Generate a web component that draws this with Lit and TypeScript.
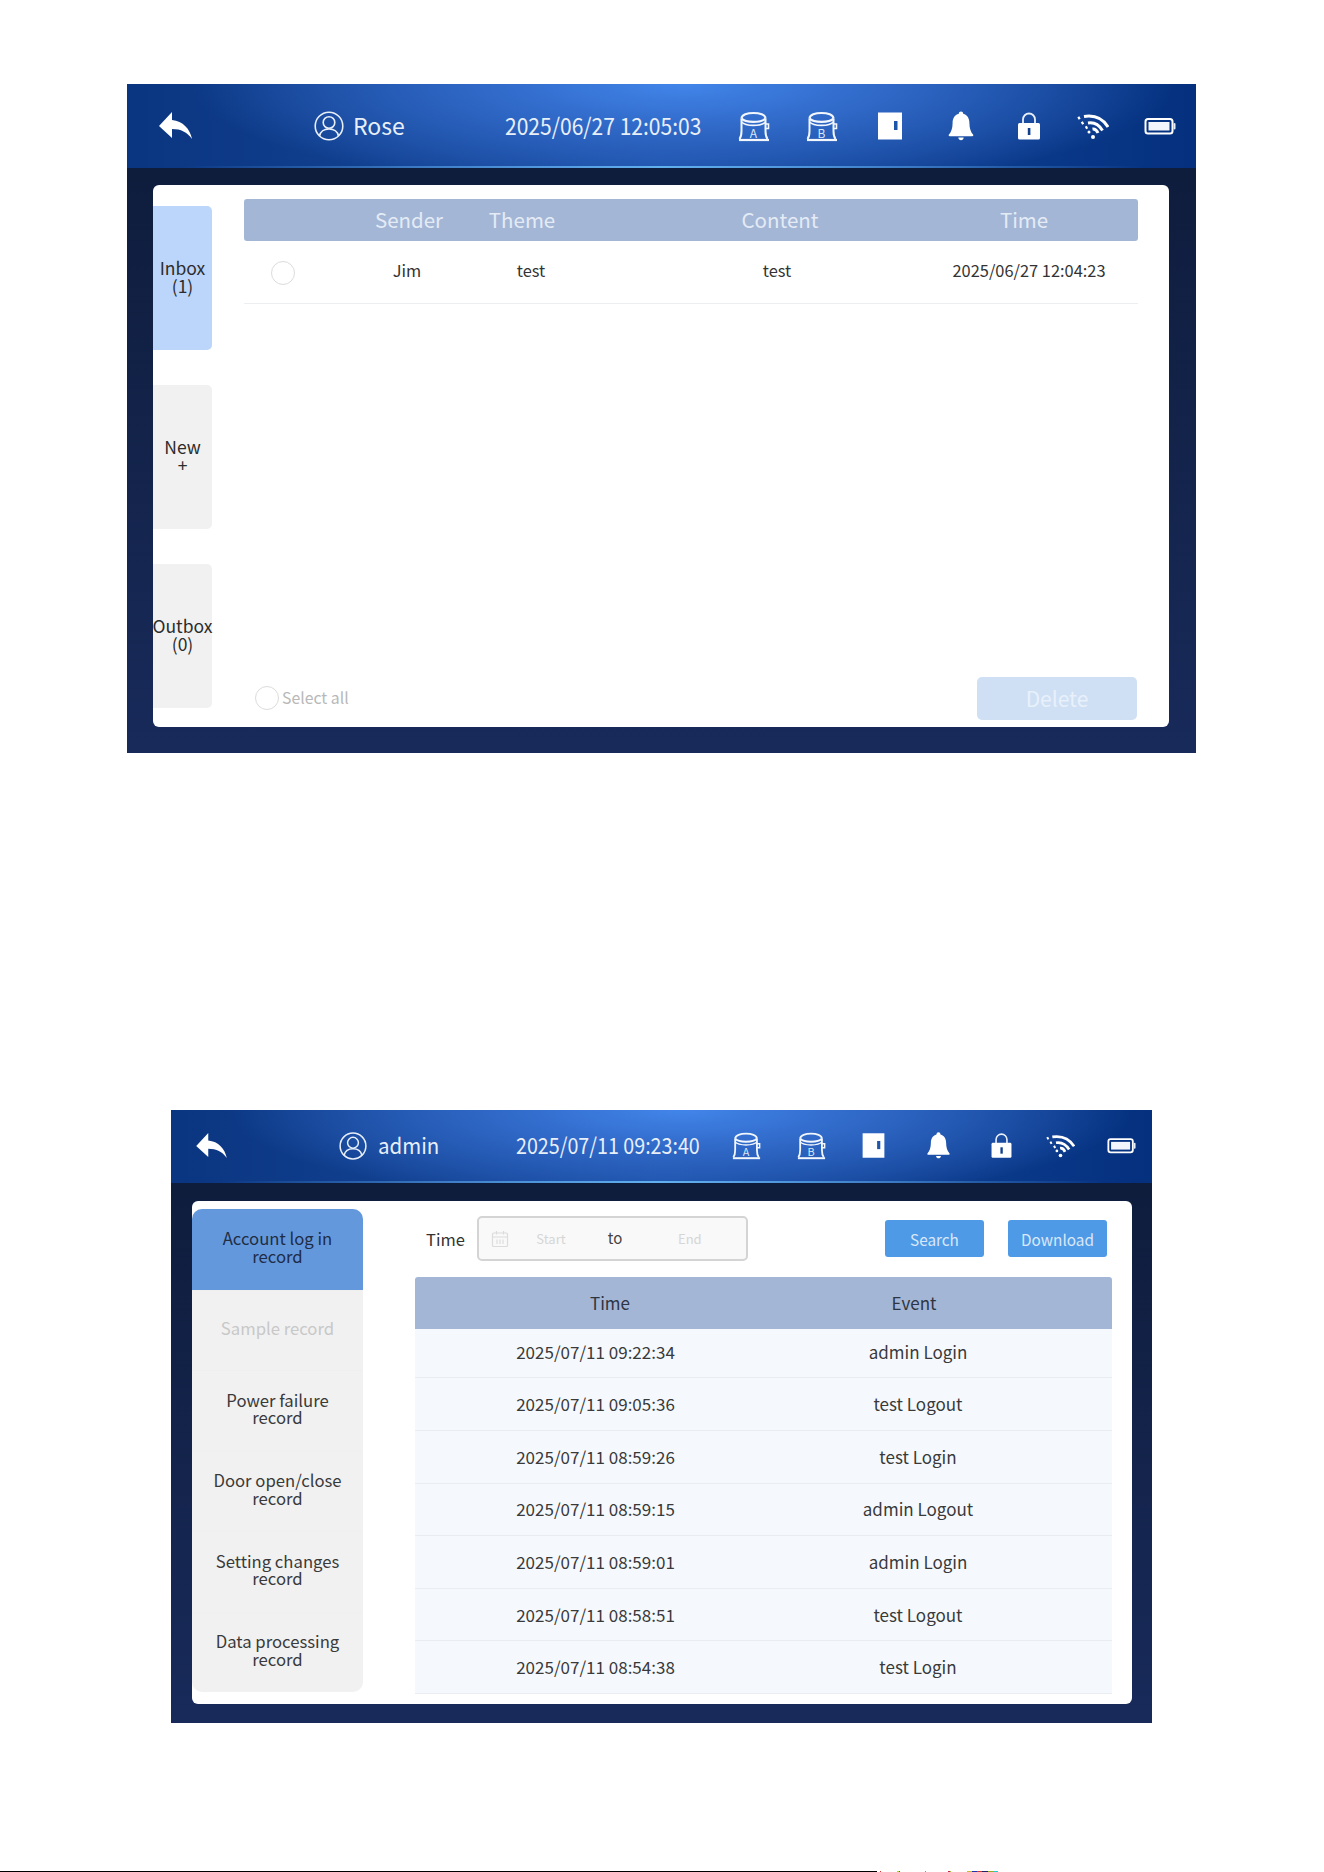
import { LitElement, html, css, svg } from "lit";
import { customElement } from "lit/decorators.js";

const compressor = (letter: string) => svg`
  <svg class="ic" viewBox="0 0 32 32" fill="none" stroke="#f2f6fd" stroke-width="2">
    <path d="M3.500 8.500C3.500 1 27.500 1 27.500 8.500"/>
    <path d="M3.500 8.500C7.500 13 23.500 13 27.500 8.500" stroke-width="2.200"/>
    <path d="M3.500 12C7.500 16.500 23.500 16.500 27.500 12" stroke-width="1.600"/>
    <path d="M3.500 8.500V21C3.500 25 3 27 1.500 29M27.500 8.500V21C27.500 25 28 27 29.500 29"/>
    <path d="M27.500 14H30.500V18.500H27.500" stroke-width="1.600"/>
    <path d="M1 30H31" stroke-width="2.200"/>
    <text x="15.500" y="27.500" text-anchor="middle" font-size="12" fill="#dbe8fa" stroke="none" class="ltr">${letter}</text>
  </svg>`;

const door = svg`
  <svg class="ic" viewBox="0 0 32 32">
    <rect x="4" y="2.500" width="24" height="27" fill="#fff"/>
    <rect x="20" y="11" width="3.500" height="9" fill="#1d55a8"/>
  </svg>`;

const bell = svg`
  <svg class="ic" viewBox="0 0 32 32" fill="#fff">
    <path d="M16 1.500c1.300 0 2.100.9 2.200 2.300 4.200 1.200 6.200 4.700 6.200 9.200 0 5.400 1.400 9 3.600 11.600.7.8.2 1.700-.8 1.700H4.800c-1 0-1.500-.9-.8-1.700 2.200-2.600 3.600-6.200 3.600-11.600 0-4.500 2-8 6.200-9.200.1-1.400.9-2.300 2.200-2.300z"/>
    <path d="M13.300 27.500h5.400c-.2 1.700-1.300 2.700-2.700 2.700s-2.500-1-2.700-2.700z"/>
  </svg>`;

const lock = svg`
  <svg class="ic" viewBox="0 0 32 32">
    <path d="M10 14V9.500a6 6 0 0 1 12 0V14" fill="none" stroke="#e8eff9" stroke-width="1.800"/>
    <rect x="5" y="13" width="22" height="16.500" rx="1.500" fill="#fff"/>
    <rect x="14.800" y="18" width="2.600" height="7" fill="#123f8e"/>
  </svg>`;

const wifi = svg`
  <svg class="ic" viewBox="0 0 32 32" fill="none" stroke="#fff" stroke-width="3">
    <path d="M7 6.500Q23 4 31 17"/>
    <path d="M11 13Q20 11.500 25.500 20.500"/>
    <path d="M15.500 19Q19 18.500 21 23"/>
    <path d="M1 8.500L3 7.500M4.500 13.500L6.500 12.500M8.500 18L10.500 17" stroke-width="2.800"/>
    <circle cx="12" cy="22" r="1.500" fill="#fff" stroke="none"/>
    <circle cx="16" cy="27" r="2" fill="#fff" stroke="none"/>
  </svg>`;

const battery = svg`
  <svg class="ic" viewBox="0 0 32 32" fill="none">
    <rect x="1.500" y="9" width="27" height="14.500" rx="2.500" stroke="#fff" stroke-width="2"/>
    <rect x="4.500" y="12" width="21" height="8.500" fill="#f2f6fc"/>
    <rect x="29.500" y="13" width="2" height="6.500" rx="1" fill="#e3ecf9"/>
  </svg>`;

const back = svg`
  <svg class="back" viewBox="0 0 33 27" fill="#fff">
    <path d="M0 14L13 0V8C24 9 31 17 33 27C28 20 22 17 13 17V26Z"/>
  </svg>`;

const user = svg`
  <svg class="user" viewBox="0 0 30 30" fill="none" stroke="#e8eff9" stroke-width="1.600">
    <circle cx="15" cy="15" r="13.800"/>
    <circle cx="15" cy="11.500" r="5.800"/>
    <path d="M5.500 25C6.500 20.500 10 18 15 18S23.500 20.500 24.500 25"/>
  </svg>`;

const calendar = svg`
  <svg class="cal" viewBox="0 0 18 18" fill="none" stroke="#dcdcdc" stroke-width="1.200">
    <rect x="1.500" y="3" width="15" height="13.500" rx="1"/>
    <path d="M1.500 7H16.500M5.500 1V4.500M12.500 1V4.500M6 9.500V14M9 9.500V14M12 9.500V14"/>
  </svg>`;

const logRows = [
  ["2025/07/11 09:22:34", "admin Login"],
  ["2025/07/11 09:05:36", "test Logout"],
  ["2025/07/11 08:59:26", "test Login"],
  ["2025/07/11 08:59:15", "admin Logout"],
  ["2025/07/11 08:59:01", "admin Login"],
  ["2025/07/11 08:58:51", "test Logout"],
  ["2025/07/11 08:54:38", "test Login"],
];

const sideItems: [string, string][] = [
  ["Account log in\nrecord", "active"],
  ["Sample record", "off"],
  ["Power failure\nrecord", ""],
  ["Door open/close\nrecord", ""],
  ["Setting changes\nrecord", ""],
  ["Data processing\nrecord", ""],
];

@customElement("app-root")
export class AppRoot extends LitElement {
  static styles = css`
    :host {
      display: block;
      width: 1324px;
      height: 1872px;
      overflow: hidden;
      background: #fff;
      font-family: "Noto Sans CJK SC", "Noto Sans", sans-serif;
      color: #333;
    }
    .page {
      padding-top: 84px;
      display: flex;
      flex-direction: column;
      align-items: flex-start;
    }
    .screen {
      display: flex;
      flex-direction: column;
      background: linear-gradient(180deg, #0d1b38 0%, #182a5a 100%);
    }
    .s1 { margin-left: 127px; width: 1069px; height: 669px; }
    .s2 { margin-left: 171px; margin-top: 357px; width: 981px; height: 613px; }

    .head {
      position: relative;
      display: grid;
      align-items: center;
      box-sizing: border-box;
      color: #e8eff9;
      background:
        radial-gradient(ellipse 46% 130% at 52% 0%, #4285ea 0%, #2e66c4 45%, rgba(24, 74, 158, 0) 100%),
        linear-gradient(90deg, #0a3580 0%, #1a4da3 50%, #04307e 100%);
    }
    .s1 .head {
      height: 84px;
      padding-bottom: 1px;
      grid-template-columns: 96px 282px 215px 68px 68px 68px 74px 62px 66px 68px;
    }
    .s2 .head {
      height: 73px;
      padding-bottom: 2px;
      grid-template-columns: 80px 265px 198px 64px 66px 58px 72px 54px 64px 58px;
    }
    .head::after {
      content: "";
      position: absolute;
      left: 0;
      right: 0;
      bottom: 0;
      height: 2px;
      background: linear-gradient(90deg, rgba(90, 160, 235, 0) 5%, #63b0ee 50%, rgba(90, 160, 235, 0) 95%);
    }
    .cell { display: flex; align-items: center; justify-content: center; }
    .ic { display: block; }
    .s1 .ic { width: 32px; height: 32px; }
    .s2 .ic { width: 29px; height: 29px; }
    .ltr { font-family: "Noto Sans CJK SC", sans-serif; }
    .back { display: block; }
    .s1 .back { width: 33px; height: 27px; }
    .s2 .back { width: 31px; height: 25px; }
    .who { display: flex; align-items: center; }
    .s1 .who { padding-left: 91px; gap: 9px; font-size: 23px; }
    .s2 .who { padding-left: 88px; gap: 11px; font-size: 22px; }
    .who span { display: inline-block; transform-origin: left center; }
    .s1 .who span { transform: translateY(-1.500px); }
    .s2 .who span { transform: translateY(-2px) scaleX(0.93); }
    .user { display: block; }
    .s1 .user { width: 30px; height: 30px; }
    .s2 .user { width: 28px; height: 28px; }
    .clock { white-space: nowrap; transform-origin: left center; }
    .s1 .clock { font-size: 23px; transform: translateY(-1.500px) scaleX(0.915); }
    .s2 .clock { font-size: 22px; transform: translateY(-2px) scaleX(0.895); }

    .card { background: #fff; border-radius: 6px; display: flex; }
    .s1 .card { margin: 17px 0 0 26px; width: 1016px; height: 542px; }
    .s2 .card { margin: 18px 0 0 21px; width: 940px; height: 503px; }

    .tabs { display: flex; flex-direction: column; gap: 35px; padding-top: 21px; width: 59px; }
    .tab {
      height: 144px;
      background: #f1f1f1;
      border-radius: 0 5px 5px 0;
      display: flex;
      align-items: center;
      justify-content: center;
      text-align: center;
      white-space: pre-line;
      font-size: 17.500px;
      line-height: 18.500px;
      color: #2c2c2c;
      padding-bottom: 2px;
      box-sizing: border-box;
    }
    .tab.on { background: #bcd5fa; }

    .mail { width: 894px; margin-left: 32px; padding-top: 14px; display: flex; flex-direction: column; }
    .mhead, .mrow { display: grid; justify-items: center; align-items: center; white-space: nowrap; }
    .mhead {
      height: 42px;
      border-radius: 3px;
      background: #a3b6d6;
      color: #e4ebf5;
      font-size: 20.500px;
      padding-bottom: 2px;
      box-sizing: border-box;
      grid-template-columns: 78px 174px 52px 464px 24px;
    }
    .mrow {
      height: 63px;
      box-sizing: border-box;
      border-bottom: 1.500px solid #eceef0;
      font-size: 16.400px;
      color: #333;
      grid-template-columns: 78px 170px 78px 414px 90px;
      padding-bottom: 4px;
    }
    .radio { width: 24px; height: 24px; border: 1.500px solid #dcdcdc; border-radius: 50%; box-sizing: border-box; margin-top: 6px; }
    .mfoot { margin-top: auto; display: flex; justify-content: space-between; align-items: center; padding: 0 1px 7px 11px; }
    .all { display: flex; align-items: center; gap: 3px; font-size: 15.800px; color: #b8b8b8; padding-bottom: 2px; }
    .all .radio { margin-top: 0; }
    .del {
      width: 160px;
      height: 43px;
      background: #cfe0f5;
      border-radius: 5px;
      color: #e8f0fa;
      font-size: 21px;
      padding-bottom: 2px;
      box-sizing: border-box;
      display: flex;
      align-items: center;
      justify-content: center;
    }

    .side {
      margin-top: 8px;
      width: 171px;
      height: 483px;
      background: #f1f1f1;
      border-radius: 10px;
      display: grid;
      grid-template-rows: repeat(6, 1fr);
      font-size: 16.700px;
      color: #3a3a3a;
      text-align: center;
      line-height: 17.500px;
      overflow: hidden;
    }
    .item {
      display: flex;
      align-items: center;
      justify-content: center;
      white-space: pre-line;
      border-top: 1px solid #efefef;
      padding-bottom: 3px;
      box-sizing: border-box;
    }
    .item.active { background: #6498dd; color: #1e2d44; border-top: 0; }
    .item.off { color: #c8c8c8; }

    .log { margin-left: 52px; width: 697px; display: flex; flex-direction: column; }
    .bar { height: 76px; display: flex; align-items: center; padding-bottom: 1px; box-sizing: border-box; }
    .lbl { margin-left: 11px; width: 51px; font-size: 16.500px; color: #333; }
    .range {
      width: 271px;
      height: 45px;
      box-sizing: border-box;
      border: 2px solid #d4d4d4;
      border-radius: 5px;
      background: #f9f9f9;
      display: grid;
      grid-template-columns: 54px 36px 92px 1fr;
      align-items: center;
      justify-items: center;
      font-size: 13px;
      color: #d6d6d6;
    }
    .cal { width: 18px; height: 18px; display: block; justify-self: start; margin-left: 12px; }
    .range .to { font-size: 15px; color: #444; padding-bottom: 2px; }
    .range .end { justify-self: start; margin-left: 17px; }
    .btn {
      width: 99px;
      height: 37px;
      border-radius: 3px;
      background: #4f9ae6;
      color: #d9e8f8;
      font-size: 15.300px;
      display: flex;
      align-items: center;
      justify-content: center;
    }
    .search { margin-left: 137px; }
    .dl { margin-left: 24px; }

    .lhead, .lrow { display: grid; justify-items: center; align-items: center; white-space: nowrap; }
    .lhead {
      height: 52px;
      border-radius: 3px 3px 0 0;
      background: #a3b6d6;
      color: #2e3542;
      font-size: 17px;
      padding-bottom: 2px;
      box-sizing: border-box;
      grid-template-columns: 390px 218px 1fr;
    }
    .lrow {
      height: 52.600px;
      box-sizing: border-box;
      background: #f5f9fe;
      border-bottom: 1.500px solid #e9ecf0;
      font-size: 17px;
      color: #3a3a3a;
      padding-bottom: 1px;
      grid-template-columns: 361px 284px 1fr;
    }
    .lrow.first { height: 49.400px; padding-bottom: 4px; }

    .foot { margin-top: 148px; display: flex; height: 1px; }
    .rule { width: 877px; background: #000; }
    .specks {
      margin-left: 3px;
      width: 118px;
      background: linear-gradient(90deg,
        #d33 0 1px, transparent 1px 17px,
        #ad2 17px 19px, #26c 19px 20px, transparent 20px 45px,
        #2bc 45px 46px, transparent 46px 68px,
        #c25 68px 70px, #9c3 70px 71px, transparent 71px 87px,
        #cb3 87px 92px, #23a 92px 97px, #c33 97px 102px, #226 102px 108px, #9a2 108px 113px, #2cc 113px 118px);
    }
  `;

  private header(name: string, time: string) {
    return html`<div class="head">
      <div class="cell">${back}</div>
      <div class="who">${user}<span>${name}</span></div>
      <div class="clock">${time}</div>
      <div class="cell">${compressor("A")}</div>
      <div class="cell">${compressor("B")}</div>
      <div class="cell">${door}</div>
      <div class="cell">${bell}</div>
      <div class="cell">${lock}</div>
      <div class="cell">${wifi}</div>
      <div class="cell">${battery}</div>
    </div>`;
  }

  render() {
    return html`<div class="page">
      <section class="screen s1">
        ${this.header("Rose", "2025/06/27 12:05:03")}
        <div class="card">
          <div class="tabs">
            <div class="tab on">${"Inbox\n(1)"}</div>
            <div class="tab">${"New\n+"}</div>
            <div class="tab">${"Outbox\n(0)"}</div>
          </div>
          <div class="mail">
            <div class="mhead">
              <span></span><span>Sender</span><span>Theme</span><span>Content</span><span>Time</span>
            </div>
            <div class="mrow">
              <div class="radio"></div><span>Jim</span><span>test</span><span>test</span><span>2025/06/27 12:04:23</span>
            </div>
            <div class="mfoot">
              <div class="all"><div class="radio"></div><span>Select all</span></div>
              <div class="del">Delete</div>
            </div>
          </div>
        </div>
      </section>

      <section class="screen s2">
        ${this.header("admin", "2025/07/11 09:23:40")}
        <div class="card">
          <div class="side">
            ${sideItems.map(([t, c]) => html`<div class="item ${c}">${t}</div>`)}
          </div>
          <div class="log">
            <div class="bar">
              <div class="lbl">Time</div>
              <div class="range">
                ${calendar}<span>Start</span><span class="to">to</span><span class="end">End</span>
              </div>
              <div class="btn search">Search</div>
              <div class="btn dl">Download</div>
            </div>
            <div class="lhead"><span>Time</span><span>Event</span></div>
            ${logRows.map(
              ([t, e], i) => html`<div class="lrow ${i === 0 ? "first" : ""}"><span>${t}</span><span>${e}</span></div>`
            )}
          </div>
        </div>
      </section>
      <div class="foot"><div class="rule"></div><div class="specks"></div></div>
    </div>`;
  }
}
